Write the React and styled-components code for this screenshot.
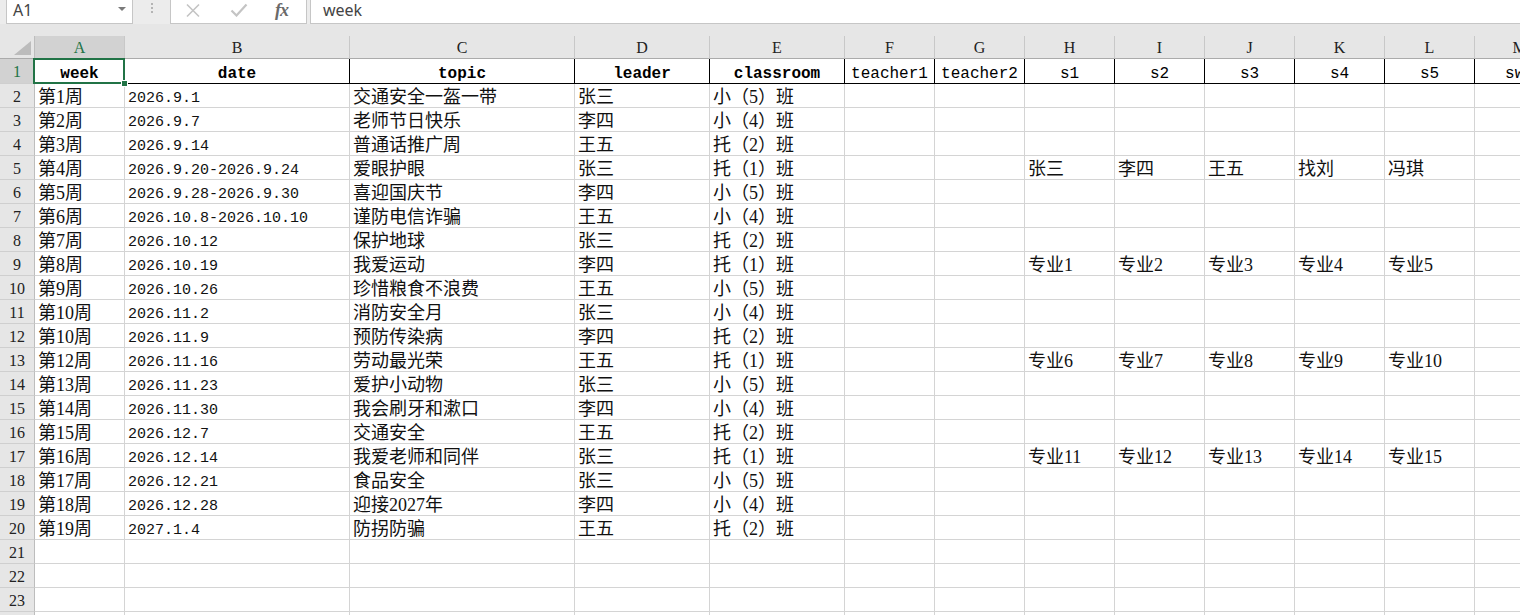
import React from "react";
import styled, { createGlobalStyle, css } from "styled-components";

const GlobalStyle = createGlobalStyle`
  html, body {
    margin: 0;
    padding: 0;
    background: #ffffff;
    overflow: hidden;
  }
`;

const GREEN = "#217346";
const GRID = "#d4d4d4";
const HEADER_BG = "#e6e6e6";
const HEADER_ACTIVE = "#d2d2d2";

const columns = [
  { key: "A", width: 90 },
  { key: "B", width: 225 },
  { key: "C", width: 225 },
  { key: "D", width: 135 },
  { key: "E", width: 135 },
  { key: "F", width: 90 },
  { key: "G", width: 90 },
  { key: "H", width: 90 },
  { key: "I", width: 90 },
  { key: "J", width: 90 },
  { key: "K", width: 90 },
  { key: "L", width: 90 },
  { key: "M", width: 90 },
];

const headings = [
  "week", "date", "topic", "leader", "classroom",
  "teacher1", "teacher2", "s1", "s2", "s3", "s4", "s5", "sw1",
];
const boldHeadings = 5;

const people = ["张三", "李四", "王五", "找刘", "冯琪"];
const majors = (from) => [0, 1, 2, 3, 4].map((i) => `专业${from + i}`);

const schedule = [
  ["第1周", "2026.9.1", "交通安全一盔一带", "张三", "小（5）班"],
  ["第2周", "2026.9.7", "老师节日快乐", "李四", "小（4）班"],
  ["第3周", "2026.9.14", "普通话推广周", "王五", "托（2）班"],
  ["第4周", "2026.9.20-2026.9.24", "爱眼护眼", "张三", "托（1）班", "", "", ...people],
  ["第5周", "2026.9.28-2026.9.30", "喜迎国庆节", "李四", "小（5）班"],
  ["第6周", "2026.10.8-2026.10.10", "谨防电信诈骗", "王五", "小（4）班"],
  ["第7周", "2026.10.12", "保护地球", "张三", "托（2）班"],
  ["第8周", "2026.10.19", "我爱运动", "李四", "托（1）班", "", "", ...majors(1)],
  ["第9周", "2026.10.26", "珍惜粮食不浪费", "王五", "小（5）班"],
  ["第10周", "2026.11.2", "消防安全月", "张三", "小（4）班"],
  ["第10周", "2026.11.9", "预防传染病", "李四", "托（2）班"],
  ["第12周", "2026.11.16", "劳动最光荣", "王五", "托（1）班", "", "", ...majors(6)],
  ["第13周", "2026.11.23", "爱护小动物", "张三", "小（5）班"],
  ["第14周", "2026.11.30", "我会刷牙和漱口", "李四", "小（4）班"],
  ["第15周", "2026.12.7", "交通安全", "王五", "托（2）班"],
  ["第16周", "2026.12.14", "我爱老师和同伴", "张三", "托（1）班", "", "", ...majors(11)],
  ["第17周", "2026.12.21", "食品安全", "张三", "小（5）班"],
  ["第18周", "2026.12.28", "迎接2027年", "李四", "小（4）班"],
  ["第19周", "2027.1.4", "防拐防骗", "王五", "托（2）班"],
];
const emptyRows = 4;

const HAN = /[\u2e80-\u9fff\u3000-\u303f\uff00-\uffef]/;

/* ---------- formula bar ---------- */

const Frame = styled.div`
  width: 1520px;
  height: 615px;
  overflow: hidden;
  display: flex;
  flex-direction: column;
  background: ${HEADER_BG};
  font-family: "Liberation Mono", "Noto Sans CJK SC", monospace;
  color: #111;
`;

const FormulaBar = styled.div`
  flex: none;
  height: 24px;
  display: flex;
  align-items: stretch;
  background: #ececec;
  font-family: "Noto Sans", "Open Sans", sans-serif;
`;

const Box = styled.div`
  background: #ffffff;
  border: 1px solid #c6c6c6;
  border-top: none;
  box-sizing: border-box;
  display: flex;
  align-items: center;
`;

const NameBox = styled(Box)`
  margin-left: 6px;
  width: 127px;
  padding: 0 6px 3px 6px;
  justify-content: space-between;
  font-size: 16px;
  color: #444;
`;

const Caret = styled.span`
  width: 0;
  height: 0;
  border-left: 4px solid transparent;
  border-right: 4px solid transparent;
  border-top: 4px solid #7a7a7a;
  margin-top: -2px;
`;

const Grip = styled.div`
  width: 37px;
  display: flex;
  flex-direction: column;
  align-items: center;
  gap: 2px;
  padding-top: 3px;
`;

const GripDot = styled.span`
  width: 2px;
  height: 2px;
  background: #b4b4b4;
`;

const FnBox = styled(Box)`
  width: 137px;
  padding: 0 0 3px 14px;
`;

const FnIcon = styled.span`
  display: flex;
  align-items: center;
  margin-left: ${(p) => p.$gap || 0}px;
  color: #c4c4c4;
`;

const Fx = styled.span`
  font-family: "Liberation Serif", serif;
  font-style: italic;
  font-weight: 700;
  font-size: 18px;
  color: #6a6a6a;
  letter-spacing: -1px;
  margin-left: 27px;
`;

const FormulaInput = styled(Box)`
  flex: 1;
  margin-left: 3px;
  padding: 0 12px 3px 12px;
  font-size: 16px;
  color: #444;
  border-right: none;
`;

const Band = styled.div`
  flex: none;
  height: 12px;
`;

/* ---------- sheet grid ---------- */

const Sheet = styled.div`
  display: grid;
  grid-template-columns: 35px ${columns.map((c) => `${c.width}px`).join(" ")};
  grid-template-rows: 23px 25px repeat(${schedule.length + emptyRows}, 24px);
  background: #ffffff;
`;

const Corner = styled.div`
  background: ${HEADER_BG};
  border-right: 1px solid #bdbdbd;
  border-bottom: 1px solid #ababab;
  box-sizing: border-box;
  display: flex;
  align-items: flex-end;
  justify-content: flex-end;
  padding: 0 3px 3px 0;
`;

const ColumnHeader = styled.div`
  box-sizing: border-box;
  background: ${(p) => (p.$active ? HEADER_ACTIVE : HEADER_BG)};
  color: ${(p) => (p.$active ? GREEN : "#222")};
  border-right: 1px solid #c8c8c8;
  border-bottom: 1px solid #ababab;
  display: flex;
  align-items: center;
  justify-content: center;
  padding-top: 2px;
  font-family: "Liberation Serif", serif;
  font-size: 16px;
`;

const RowHeader = styled.div`
  box-sizing: border-box;
  background: ${(p) => (p.$active ? HEADER_ACTIVE : HEADER_BG)};
  color: ${(p) => (p.$active ? GREEN : "#222")};
  border-right: 1px solid #bdbdbd;
  border-bottom: 1px solid #cfcfcf;
  display: flex;
  align-items: center;
  justify-content: center;
  padding-top: 2px;
  font-family: "Liberation Serif", serif;
  font-size: 16px;
`;

/* text sits on a common baseline near the bottom of each cell;
   cells holding Chinese use full-width glyphs with half-width digits */
const Cell = styled.div`
  box-sizing: border-box;
  display: flex;
  align-items: flex-end;
  padding: 0 3px;
  border-right: 1px solid ${GRID};
  border-bottom: 1px solid ${GRID};
  font-size: 15px;
  line-height: 16px;
  white-space: nowrap;
  ${(p) =>
    p.$han &&
    css`
      font-family: "Liberation Serif", "Noto Sans CJK SC", serif;
      font-size: 18px;
      padding-bottom: 2px;
    `}
  ${(p) =>
    p.$head &&
    css`
      justify-content: center;
      font-size: 16px;
      line-height: normal;
      font-weight: ${p.$bold ? 700 : 400};
      border-right-color: #000;
      border-bottom-color: #000;
      color: #000;
    `}
  ${(p) =>
    p.$active &&
    css`
      position: relative;
    `}
`;

const Selection = styled.div`
  position: absolute;
  left: -2px;
  top: -1px;
  right: -1px;
  bottom: -1px;
  border: 2px solid ${GREEN};
  z-index: 3;
  pointer-events: none;
`;

const FillHandle = styled.span`
  position: absolute;
  right: -5px;
  bottom: -5px;
  width: 5px;
  height: 5px;
  background: ${GREEN};
  border: 1px solid #ffffff;
`;

function CrossIcon() {
  return (
    <svg width="16" height="15" viewBox="0 0 16 15">
      <path d="M2 1.5 L14 13.5 M14 1.5 L2 13.5" stroke="currentColor" strokeWidth="1.6" fill="none" />
    </svg>
  );
}

function CheckIcon() {
  return (
    <svg width="18" height="14" viewBox="0 0 18 14">
      <path d="M1.5 7.5 L6.5 12.5 L16.5 1.5" stroke="currentColor" strokeWidth="2.2" fill="none" />
    </svg>
  );
}

function CornerMark() {
  return (
    <svg width="17" height="14" viewBox="0 0 17 14">
      <polygon points="17,0 17,14 0,14" fill="#bcbcbc" />
    </svg>
  );
}

export default function App() {
  const rowCount = 1 + schedule.length + emptyRows;
  return (
    <Frame>
      <GlobalStyle />
      <FormulaBar>
        <NameBox>
          <span>A1</span>
          <Caret />
        </NameBox>
        <Grip>
          <GripDot />
          <GripDot />
          <GripDot />
        </Grip>
        <FnBox>
          <FnIcon>
            <CrossIcon />
          </FnIcon>
          <FnIcon $gap={29}>
            <CheckIcon />
          </FnIcon>
          <Fx>fx</Fx>
        </FnBox>
        <FormulaInput>week</FormulaInput>
      </FormulaBar>
      <Band />
      <Sheet>
        <Corner>
          <CornerMark />
        </Corner>
        {columns.map((c, i) => (
          <ColumnHeader key={c.key} $active={i === 0}>
            {c.key}
          </ColumnHeader>
        ))}

        <RowHeader $active>1</RowHeader>
        {headings.map((h, i) => (
          <Cell key={h} $head $bold={i < boldHeadings} $active={i === 0}>
            {h}
            {i === 0 && (
              <Selection>
                <FillHandle />
              </Selection>
            )}
          </Cell>
        ))}

        {Array.from({ length: rowCount - 1 }, (_, r) => {
          const values = schedule[r] || [];
          return (
            <React.Fragment key={r}>
              <RowHeader>{r + 2}</RowHeader>
              {columns.map((c, ci) => {
                const value = values[ci] || "";
                return (
                  <Cell key={c.key} $han={HAN.test(value)}>
                    {value}
                  </Cell>
                );
              })}
            </React.Fragment>
          );
        })}
      </Sheet>
    </Frame>
  );
}
